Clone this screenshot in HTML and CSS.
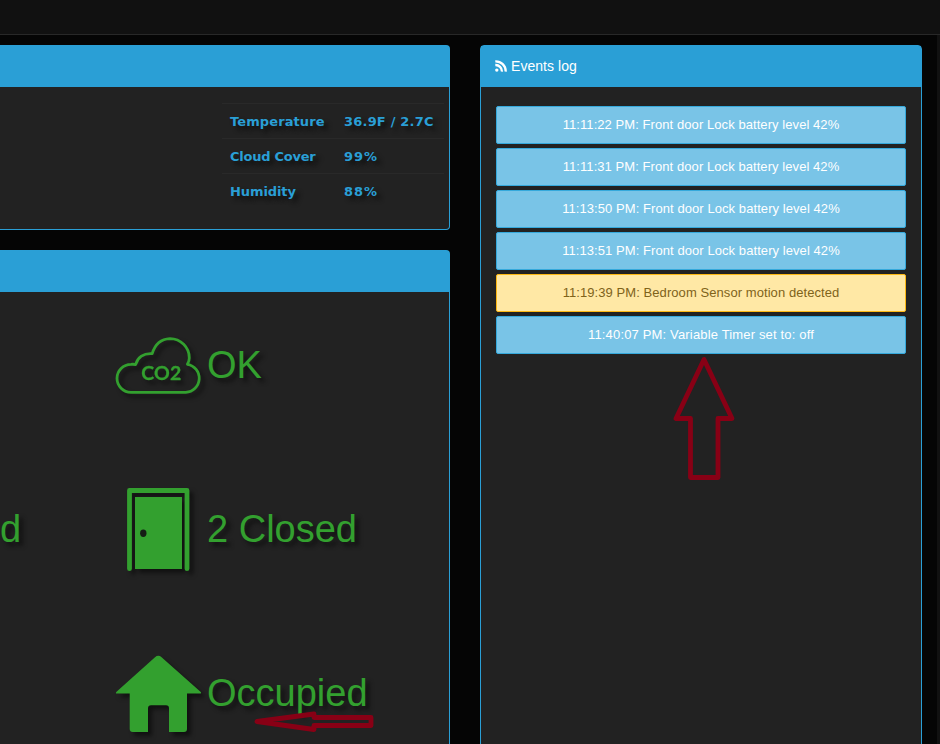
FILE: index.html
```html
<!DOCTYPE html>
<html lang="en">
<head>
<meta charset="utf-8">
<title>Home dashboard</title>
<link rel="stylesheet" href="styles.css">
</head>
<body>
<header class="navbar"></header>
<main class="dashboard">
  <div class="column-main">
    <section class="panel panel-left weather">
      <div class="panel-heading"></div>
      <div class="panel-body">
        <table class="weather-table">
          <tr><th>Temperature</th><td>36.9F / 2.7C</td></tr>
          <tr><th class="tight">Cloud Cover</th><td class="wide">99%</td></tr>
          <tr><th class="plain">Humidity</th><td class="wide">88%</td></tr>
        </table>
      </div>
    </section>
    <section class="panel panel-left status">
      <div class="panel-heading"></div>
      <div class="status-row">
        <div class="status-prev"></div>
        <svg class="icon" viewBox="0 0 90 90">
          <path d="M17 72.300H71.800A14.100 14.100 0 0 0 73.400 44.300Q75.300 41 75.300 38A19.300 19.300 0 0 0 56 18.700Q42.500 19.300 38.200 33.700C29.500 33 23.500 37.500 21.700 44.500Q19.500 44.100 17 44.300A14 14 0 0 0 17 72.300z" fill="none" stroke="#33a02f" stroke-width="2.800" stroke-linejoin="round"/>
          <text class="co2" x="27.300" y="60.300" textLength="40">CO2</text>
        </svg>
        <span class="status-value">OK</span>
      </div>
      <div class="status-row">
        <div class="status-prev">d</div>
        <svg class="icon" viewBox="0 0 90 90">
          <path d="M15.500 84.700V6.500H73V84.700" fill="none" stroke="#33a02f" stroke-width="4.800" stroke-linejoin="round" stroke-linecap="round"/>
          <path fill="#33a02f" d="M21 13H68V85H21z"/>
          <ellipse cx="29.300" cy="49.300" rx="3.200" ry="3.700" fill="#151d15"/>
        </svg>
        <span class="status-value">2 Closed</span>
      </div>
      <div class="status-row">
        <div class="status-prev"></div>
        <svg class="icon" viewBox="0 0 90 90">
          <path fill="#33a02f" d="M41 9.200Q44.300 6.500 47.600 9.200L86.500 43.800Q88 45.600 85.500 45.600H73V81Q73 84 70 84H55V60.300Q55 57.300 52 57.300H37Q34 57.300 34 60.300V84H18.700Q15.700 84 15.700 81V45.600H3Q1 45.600 2.500 43.800z"/>
        </svg>
        <span class="status-value">Occupied</span>
      </div>
    </section>
  </div>
  <section class="panel events">
    <div class="panel-heading">
      <svg class="rss" viewBox="0 0 12 12"><circle cx="1.800" cy="10.100" r="1.700"/><path d="M.3 5A6.300 6.300 0 0 1 6.900 11.600M.3 1.300A10 10 0 0 1 10.700 11.600"/></svg>
      <span>Events log</span>
    </div>
    <div class="event-list">
      <div class="event">11:11:22 PM: Front door Lock battery level 42%</div>
      <div class="event">11:11:31 PM: Front door Lock battery level 42%</div>
      <div class="event">11:13:50 PM: Front door Lock battery level 42%</div>
      <div class="event">11:13:51 PM: Front door Lock battery level 42%</div>
      <div class="event event-warning">11:19:39 PM: Bedroom Sensor motion detected</div>
      <div class="event event-timer">11:40:07 PM: Variable Timer set to: off</div>
    </div>
  </section>
  <div class="page-edge"></div>
</main>
<svg class="annotations" viewBox="0 0 940 744">
  <path d="M704 359.500L676 418.500H690.500V477.500H718V418.500H732z"/>
  <path d="M257 721.500L314 714V717.500H371V725.500H314V729.500z"/>
</svg>
</body>
</html>
```

FILE: styles.css
```css
* { box-sizing: border-box; }
body {
  margin: 0;
  height: 744px;
  overflow: hidden;
  background: #050505;
  font-family: "Liberation Sans", Arial, sans-serif;
}
.navbar {
  height: 35px;
  background: #111;
  border-bottom: 1px solid #282828;
}
.dashboard {
  display: flex;
  height: 709px;
}
.column-main {
  width: 450px;
  margin-right: 30px;
  padding-top: 10px;
}
.panel {
  background: #222;
  border: 1px solid #2a9fd6;
  border-radius: 4px;
}
.panel-left {
  border-left: 0;
  border-top-left-radius: 0;
  border-bottom-left-radius: 0;
}
.panel-heading {
  display: flex;
  align-items: center;
  height: 41px;
  padding: 0 14px 2px;
  background: #2a9fd6;
  color: #fff;
  font-size: 14px;
  letter-spacing: 0.05px;
}
.weather {
  height: 185px;
  margin-bottom: 20px;
}
.weather .panel-body {
  display: flex;
  justify-content: flex-end;
  padding: 16px 5px 0 0;
}
.weather-table {
  width: 222px;
  border-collapse: collapse;
  table-layout: fixed;
  color: #2a9fd6;
  font: bold 13px/20px "DejaVu Sans", Verdana, sans-serif;
  text-shadow: 4px 4px 4px #111;
}
.weather-table th,
.weather-table td {
  height: 35px;
  padding: 2px 0 0 8px;
  border-top: 1px solid #292929;
  text-align: left;
  white-space: nowrap;
}
.weather-table th { width: 114px; padding-left: 8px; letter-spacing: 0.1px; }
.weather-table th.tight { letter-spacing: -0.25px; }
.weather-table th.plain { letter-spacing: -0.1px; }
.weather-table td { letter-spacing: 0.2px; }
.weather-table td.wide { letter-spacing: 1px; }
.status {
  height: 520px;
}
.status-row {
  display: flex;
  align-items: center;
  height: 164px;
  color: #33a02f;
  font-size: 38px;
  text-shadow: 4px 4px 4px #111;
}
.status-row:nth-child(2) { height: 155px; padding-bottom: 9px; }
.status-prev { width: 114px; }
.icon {
  width: 90px;
  height: 90px;
  margin-right: 3px;
  overflow: visible;
  filter: drop-shadow(4px 4px 2px #111);
}
.co2 {
  fill: #33a02f;
  font: bold 19.5px Lato, sans-serif;
  stroke: #33a02f;
  stroke-width: 0.3px;
  text-shadow: none;
}
.events {
  width: 442px;
  height: 720px;
  margin-top: 10px;
}
.rss {
  width: 12px;
  height: 12px;
  margin-right: 4px;
  fill: #fff;
}
.rss path {
  fill: none;
  stroke: #fff;
  stroke-width: 2.3;
}
.event-list {
  display: grid;
  gap: 4px;
  padding: 19px 15px;
}
.event {
  height: 38px;
  border: 1px solid #35a9dc;
  border-radius: 2px;
  background: #79c4e7;
  color: #fff;
  font-size: 13px;
  line-height: 36px;
  letter-spacing: 0.07px;
  text-align: center;
}
.event-timer { letter-spacing: 0.16px; }
.event-warning {
  background: #ffe8a5;
  border-color: #fdb813;
  color: #80631a;
}
.page-edge {
  width: 3px;
  margin-left: auto;
  background: #111;
}
.annotations {
  position: absolute;
  top: 0;
  left: 0;
  width: 940px;
  height: 744px;
  fill: none;
  stroke: #880015;
  stroke-width: 4.800;
  stroke-linejoin: round;
  pointer-events: none;
}
```
